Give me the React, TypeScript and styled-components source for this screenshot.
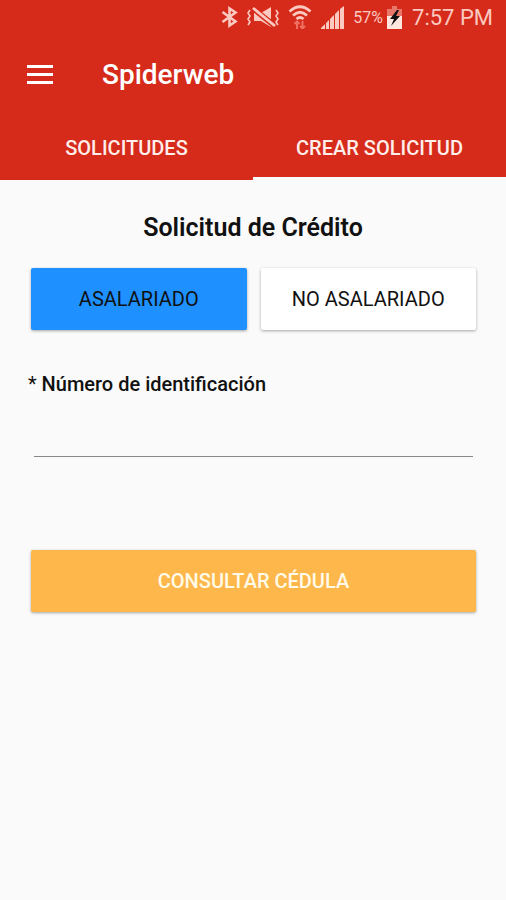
import React, { useState } from "react";
import styled, { createGlobalStyle } from "styled-components";

const Global = createGlobalStyle`
  * { box-sizing: border-box; }
  body { margin: 0; background: #fafafa; font-family: Roboto, sans-serif; color: #111; }
  button, input { font: inherit; }
`;

const Header = styled.header`
  background: #d62b1b;
  color: #fff;
`;

const StatusBar = styled.div`
  height: 36px;
  padding: 0 13px 2px;
  display: flex;
  align-items: center;
  justify-content: flex-end;
  gap: 8px;
  color: #fbc9c0;

  svg { flex: none; }
`;

const Battery = styled.span`
  margin-right: 2px;
  display: flex;
  align-items: center;
  gap: 4px;
  font-size: 16px;
`;

const Clock = styled.span`
  font-size: 22px;
`;

const TopBar = styled.div`
  height: 78px;
  padding: 0 26px;
  display: flex;
  align-items: center;
  gap: 48px;
`;

const IconButton = styled.button`
  display: flex;
  padding: 0;
  border: 0;
  background: none;
  color: #fff;
  cursor: pointer;
`;

const AppName = styled.h1`
  margin: 0;
  font-size: 28px;
  line-height: 32px;
  font-weight: 500;
`;

const Tabs = styled.div`
  display: grid;
  grid-template-columns: 1fr 1fr;
`;

const Tab = styled.button<{ $active: boolean }>`
  height: 66px;
  padding: 4px 0 0;
  border: 0;
  border-bottom: 3px solid ${(p) => (p.$active ? "#fafafa" : "transparent")};
  background: none;
  color: #ffeeea;
  font-size: 20px;
  font-weight: 500;
  cursor: pointer;
`;

const Content = styled.main`
  padding: 32px 28px;
  display: flex;
  flex-direction: column;
`;

const Title = styled.h2`
  margin: 0 0 24px;
  font-size: 25px;
  line-height: 32px;
  font-weight: 600;
  text-align: center;
`;

const Actions = styled.div`
  margin: 0 2px 0 3px;
  display: grid;
  grid-auto-flow: column;
  grid-auto-columns: 1fr;
  gap: 14px;
`;

const RaisedButton = styled.button<{ $fill: string; $ink: string }>`
  height: 62px;
  padding: 0;
  border: 0;
  border-radius: 2px;
  background: ${(p) => p.$fill};
  color: ${(p) => p.$ink};
  font-size: 20px;
  box-shadow: 0 1px 3px rgba(0, 0, 0, 0.35);
  cursor: pointer;
`;

const SubmitButton = styled(RaisedButton)`
  font-weight: 500;
`;

const Label = styled.label`
  margin-top: 42px;
  font-size: 20px;
  line-height: 24px;
  font-weight: 500;
`;

const Star = styled.span`
  font-weight: 400;
`;

const Field = styled.input`
  height: 61px;
  margin: 0 5px 93px 6px;
  padding: 12px 0;
  border: 0;
  border-bottom: 1px solid #888;
  border-radius: 0;
  background: none;
  font-size: 22px;
  outline: none;
`;

export default function App() {
  const [tab, setTab] = useState(1);
  const [salaried, setSalaried] = useState(true);
  return (
    <>
      <Global />
      <Header>
        <StatusBar>
          <svg width="17" height="22" viewBox="0 0 17 22" fill="none" stroke="currentColor" strokeWidth="2.6" aria-hidden="true">
            <path d="M1.500 6L14.500 15.500L8.500 19.500V2.500L14.500 6.500L1.500 16" />
          </svg>
          <svg width="34" height="22" viewBox="0 0 34 22" aria-hidden="true">
            <path d="M8 7h7l10-6v20l-10-6H8z" fill="currentColor" />
            <path d="M7 4L28 21" stroke="#d62b1b" strokeWidth="3" />
            <path d="M7 1.500L29 19" stroke="#d62b1b" strokeWidth="4" />
            <path d="M7 2L29 20" stroke="currentColor" strokeWidth="2.800" />
            <path d="M4 4L2 7L4 10L2 13L4 16L2 19M30 4L32 7L30 10L32 13L30 16L32 19" fill="none" stroke="currentColor" strokeWidth="1.600" />
          </svg>
          <svg width="24" height="24" viewBox="0 0 24 24" fill="none" aria-hidden="true">
            <path d="M1.500 6.500Q12-3 22.500 6.500M5 10.500Q12 4 19 10.500M8.500 14Q12 11 15.500 14" stroke="currentColor" strokeWidth="2.800" />
            <path d="M9 16v8M6.500 19L9 16.500L11.500 19M14.500 16v8M12 21L14.500 23.500L17 21" stroke="#ef6f62" strokeWidth="2" />
          </svg>
          <svg width="25" height="23" viewBox="0 0 25 23" fill="currentColor" aria-hidden="true">
            <path d="M1 23v-1l4-4v5zM6 17l3-3v9H6zM10 13l4-4v14h-4zM15 8l4-4v19h-4zM20 3l4-3v23h-4z" />
          </svg>
          <Battery>
            57%
            <svg width="15" height="23" viewBox="0 0 15 23" aria-hidden="true">
              <path d="M5 0h5v3h5v8H0V3h5z" fill="#e8776b" />
              <path d="M0 10h15v13H0z" fill="#ffe6de" />
              <path d="M10 4L3 13h4l-3 7l9-10H9l3-6z" fill="#111" />
            </svg>
          </Battery>
          <Clock>7:57 PM</Clock>
        </StatusBar>
        <TopBar>
          <IconButton aria-label="Menú">
            <svg width="28" height="20" viewBox="0 0 28 20" fill="currentColor">
              <path d="M1 0h26v3H1zM1 8h26v3H1zM1 16h26v3H1z" />
            </svg>
          </IconButton>
          <AppName>Spiderweb</AppName>
        </TopBar>
        <Tabs role="tablist">
          <Tab role="tab" aria-selected={tab === 0} $active={tab === 0} onClick={() => setTab(0)}>SOLICITUDES</Tab>
          <Tab role="tab" aria-selected={tab === 1} $active={tab === 1} onClick={() => setTab(1)}>CREAR SOLICITUD</Tab>
        </Tabs>
      </Header>
      <Content>
        <Title>Solicitud de Crédito</Title>
        <Actions>
          <RaisedButton $fill={salaried ? "#1e90ff" : "#fff"} $ink="#111" onClick={() => setSalaried(true)}>ASALARIADO</RaisedButton>
          <RaisedButton $fill={salaried ? "#fff" : "#1e90ff"} $ink="#111" onClick={() => setSalaried(false)}>NO ASALARIADO</RaisedButton>
        </Actions>
        <Label htmlFor="cedula"><Star>*</Star> Número de identificación</Label>
        <Field id="cedula" />
        <Actions>
          <SubmitButton $fill="#fdb74b" $ink="#fffbe8">CONSULTAR CÉDULA</SubmitButton>
        </Actions>
      </Content>
    </>
  );
}
